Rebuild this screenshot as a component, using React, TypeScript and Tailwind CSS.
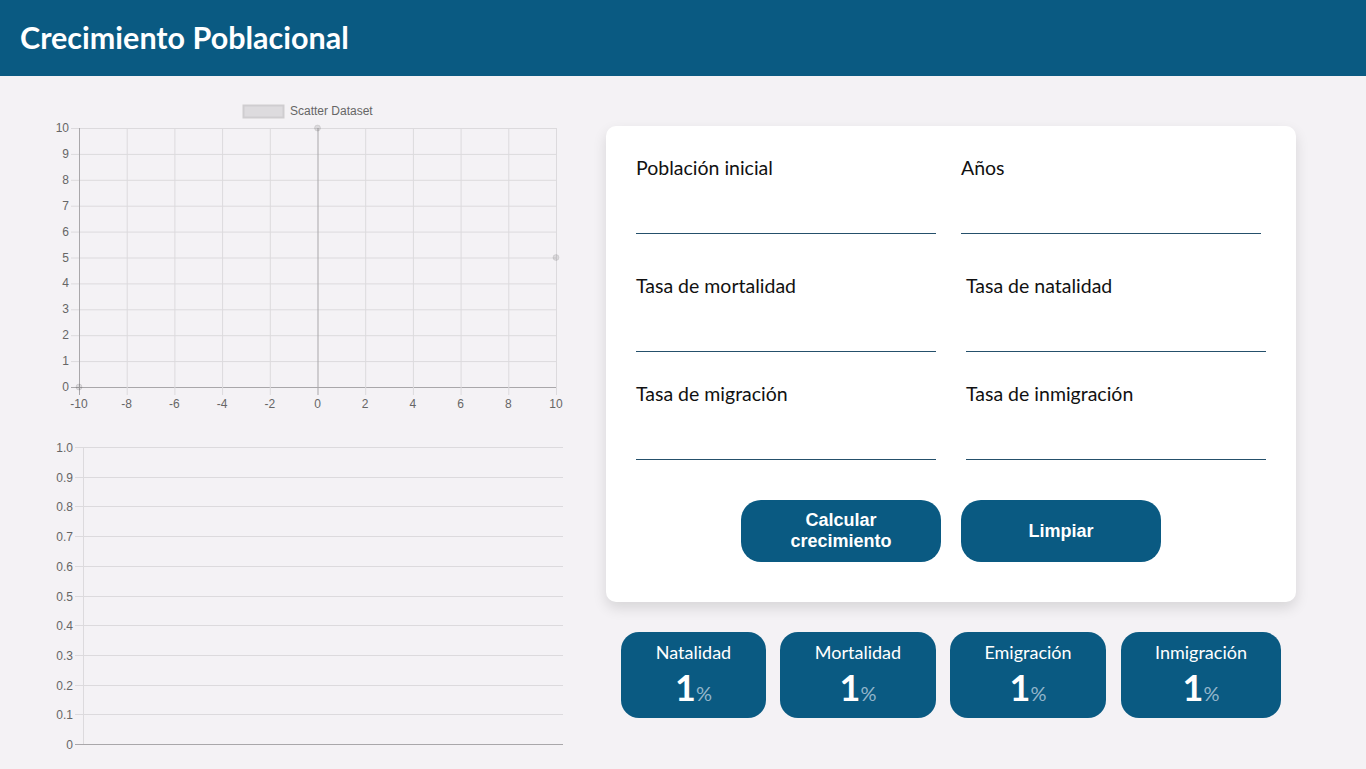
const lato = "font-['Lato','Liberation_Sans',sans-serif]";
const chartFont = "Liberation Sans, Arial, sans-serif";

function ScatterChart() {
  const x0 = 79;
  const x1 = 556;
  const y0 = 387;
  const y1 = 128;
  const xs = [-10, -8, -6, -4, -2, 0, 2, 4, 6, 8, 10];
  const ys = [0, 1, 2, 3, 4, 5, 6, 7, 8, 9, 10];
  const px = (v: number) => x0 + ((v + 10) / 20) * (x1 - x0);
  const py = (v: number) => y0 - (v / 10) * (y0 - y1);
  return (
    <svg width={540} height={324} viewBox="30 96 540 324" className="block">
      <rect x={243.5} y={105.5} width={40} height={12} fill="#dddbde" stroke="#cfcdd0" strokeWidth={2} />
      <text x={290} y={115} fontSize={12} fill="#666" fontFamily={chartFont}>
        Scatter Dataset
      </text>
      {ys.map((v) => (
        <g key={"y" + v}>
          <line x1={x0 - 8} x2={x1} y1={py(v) + 0.5} y2={py(v) + 0.5} stroke={v === 0 ? "#a9a7aa" : "#dcdadd"} />
          <text x={x0 - 10} y={py(v) + 4} fontSize={12} fill="#666" textAnchor="end" fontFamily={chartFont}>
            {v}
          </text>
        </g>
      ))}
      {xs.map((v) => (
        <g key={"x" + v}>
          <line x1={px(v) + 0.5} x2={px(v) + 0.5} y1={y1} y2={y0 + 8} stroke={v === 0 || v === -10 ? "#a9a7aa" : "#dcdadd"} />
          <text x={px(v)} y={y0 + 21} fontSize={12} fill="#666" textAnchor="middle" fontFamily={chartFont}>
            {v}
          </text>
        </g>
      ))}
      {[
        [0, 10],
        [10, 5],
        [-10, 0],
      ].map(([a, b]) => (
        <circle key={a + "-" + b} cx={px(a)} cy={py(b)} r={3} fill="rgba(0,0,0,0.1)" stroke="rgba(0,0,0,0.08)" />
      ))}
    </svg>
  );
}

function EmptyChart() {
  const x0 = 83;
  const x1 = 563;
  const y0 = 744;
  const y1 = 447;
  const ticks = ["0", "0.1", "0.2", "0.3", "0.4", "0.5", "0.6", "0.7", "0.8", "0.9", "1.0"];
  return (
    <svg width={540} height={330} viewBox="30 430 540 330" className="block">
      <line x1={x0 + 0.5} x2={x0 + 0.5} y1={y1} y2={y0} stroke="#dcdadd" />
      {ticks.map((t, i) => {
        const y = Math.round(y0 - (i / 10) * (y0 - y1)) + 0.5;
        return (
          <g key={t}>
            <line x1={x0 - 8} x2={x1} y1={y} y2={y} stroke={i === 0 ? "#a9a7aa" : "#dcdadd"} />
            <text x={x0 - 10} y={y + 4} fontSize={12} fill="#666" textAnchor="end" fontFamily={chartFont}>
              {t}
            </text>
          </g>
        );
      })}
    </svg>
  );
}

function Field({ label }: { label: string }) {
  return (
    <div className="flex w-[300px] flex-col">
      <label className="text-[19.5px] leading-[22px] text-[#111]">{label}</label>
      <input className="h-[55px] w-full border-b border-[#25506b] bg-transparent outline-none" />
    </div>
  );
}

function Stat({ title, width }: { title: string; width: string }) {
  return (
    <div className={`flex h-[86px] flex-col items-center rounded-[18px] bg-[#0a5a82] pt-[9px] text-white ${width}`}>
      <span className="text-[18px] leading-[22px]">{title}</span>
      <span className="mt-[6px] flex items-baseline leading-none">
        <span className="text-[36px] font-bold">1</span>
        <span className="text-[20px] text-[#93b6cb]">%</span>
      </span>
    </div>
  );
}

export default function App() {
  return (
    <div className={`min-h-screen bg-[#f4f2f5] ${lato}`}>
      <header className="flex h-[76px] items-center bg-[#0a5a82] px-[20px]">
        <h1 className="text-[30.5px] font-bold text-white">Crecimiento Poblacional</h1>
      </header>
      <main className="flex pl-[30px] pt-[20px]">
        <div className="flex w-[540px] flex-col gap-[10px]">
          <ScatterChart />
          <EmptyChart />
        </div>
        <div className="ml-[36px] mt-[30px] flex flex-col">
          <div className="w-[690px] rounded-[10px] bg-white pb-[40px] pl-[30px] pt-[31px] shadow-[0_6px_14px_rgba(0,0,0,0.12)]">
            <div className="flex gap-[25px]">
              <Field label="Población inicial" />
              <Field label="Años" />
            </div>
            <div className="mt-[41px] flex gap-[30px]">
              <Field label="Tasa de mortalidad" />
              <Field label="Tasa de natalidad" />
            </div>
            <div className="mt-[31px] flex gap-[30px]">
              <Field label="Tasa de migración" />
              <Field label="Tasa de inmigración" />
            </div>
            <div className="mt-[40px] flex justify-center gap-[20px] pr-[30px] font-['Liberation_Sans',Arial,sans-serif] text-[18px] font-bold leading-[21px] text-white">
              <button className="h-[62px] w-[200px] rounded-[20px] bg-[#0a5a82]">
                Calcular
                <br />
                crecimiento
              </button>
              <button className="h-[62px] w-[200px] rounded-[20px] bg-[#0a5a82]">Limpiar</button>
            </div>
          </div>
          <div className="mt-[30px] flex pl-[15px]">
            <Stat title="Natalidad" width="w-[145px]" />
            <div className="w-[14px]" />
            <Stat title="Mortalidad" width="w-[156px]" />
            <div className="w-[14px]" />
            <Stat title="Emigración" width="w-[156px]" />
            <div className="w-[15px]" />
            <Stat title="Inmigración" width="w-[160px]" />
          </div>
        </div>
      </main>
    </div>
  );
}
